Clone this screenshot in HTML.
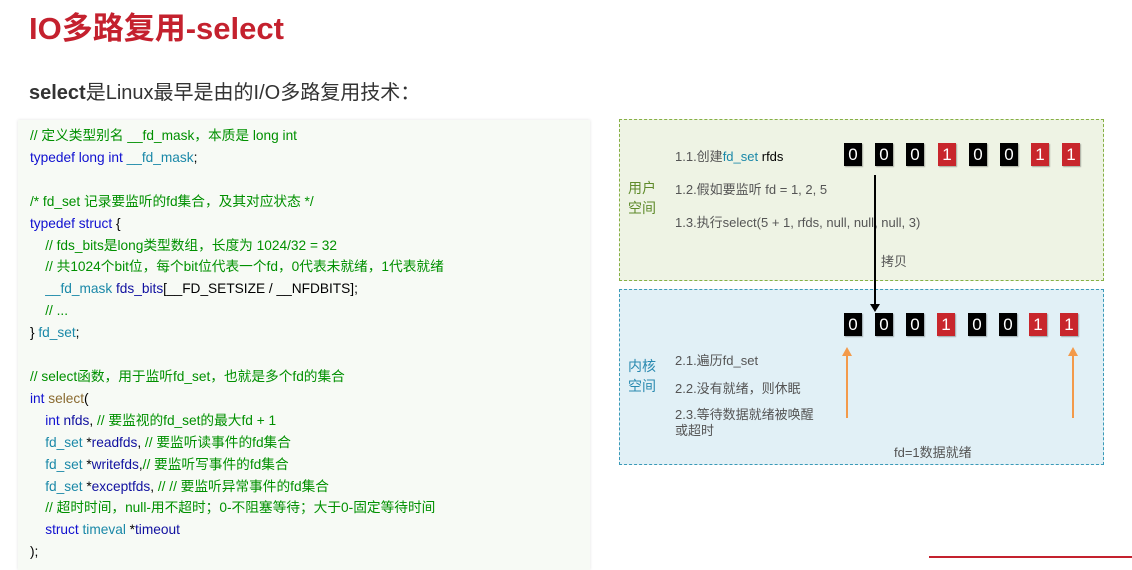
<!DOCTYPE html>
<html><head><meta charset="utf-8"><style>
body{margin:0;width:1132px;height:558px;background:#fff;overflow:hidden;position:relative;font-family:"Liberation Sans","Noto Sans CJK SC",sans-serif}
.a{position:absolute;white-space:nowrap}
h1{position:absolute;left:29px;top:3px;margin:0;font-size:31px;color:#c4212e;font-weight:bold;letter-spacing:0}
.p{left:29px;top:76px;font-size:20px;color:#333}
.code{position:absolute;left:18px;top:120px;width:572px;height:450px;background:#f7faf5;box-shadow:0 0 3px rgba(0,0,0,.12)}
.code pre{margin:0;position:absolute;left:12px;top:5px;font-family:"Liberation Sans","Noto Sans CJK SC",sans-serif;font-size:13.7px;line-height:21.9px;color:#000}
.c{color:#009000}.k{color:#1010d0}.t{color:#1a88a8}.f{color:#8a6a30}.v{color:#1010a0}
.box{position:absolute;left:619px;width:485px;box-sizing:border-box}
.d{font-size:13px;color:#555}
.cell{position:absolute;width:18px;height:23px;background:#000;color:#fff;font-size:17px;text-align:center;line-height:23px;box-shadow:1px 1px 1px rgba(0,0,0,.3)}
.r{background:#c8262c}
</style></head><body>
<h1>IO多路复用-select</h1>
<div class="a p"><b>select</b>是Linux最早是由的I/O多路复用技术：</div>
<div class="code"><pre><span class="c">// 定义类型别名 __fd_mask，本质是 long int</span>
<span class="k">typedef long int</span> <span class="t">__fd_mask</span>;

<span class="c">/* fd_set 记录要监听的fd集合，及其对应状态 */</span>
<span class="k">typedef struct</span> {
    <span class="c">// fds_bits是long类型数组，长度为 1024/32 = 32</span>
    <span class="c">// 共1024个bit位，每个bit位代表一个fd，0代表未就绪，1代表就绪</span>
    <span class="t">__fd_mask</span> <span class="v">fds_bits</span>[__FD_SETSIZE / __NFDBITS];
    <span class="c">// ...</span>
} <span class="t">fd_set</span>;

<span class="c">// select函数，用于监听fd_set，也就是多个fd的集合</span>
<span class="k">int</span> <span class="f">select</span>(
    <span class="k">int</span> <span class="v">nfds</span>, <span class="c">// 要监视的fd_set的最大fd + 1</span>
    <span class="t">fd_set</span> *<span class="v">readfds</span>, <span class="c">// 要监听读事件的fd集合</span>
    <span class="t">fd_set</span> *<span class="v">writefds</span>,<span class="c">// 要监听写事件的fd集合</span>
    <span class="t">fd_set</span> *<span class="v">exceptfds</span>, <span class="c">// // 要监听异常事件的fd集合</span>
    <span class="c">// 超时时间，null-用不超时；0-不阻塞等待；大于0-固定等待时间</span>
    <span class="k">struct</span> <span class="t">timeval</span> *<span class="v">timeout</span>
);</pre></div>

<div class="box" style="top:119px;height:162px;background:#eef3e4;border:1px dashed #86b044"></div>
<div class="box" style="top:289px;height:176px;background:#e1f0f6;border:1px dashed #3a9ab8"></div>

<div class="a" style="left:628px;top:178px;font-size:14px;line-height:20px;color:#5e8a2a">用户<br>空间</div>
<div class="a" style="left:628px;top:356px;font-size:14px;line-height:20px;color:#2a8ab0">内核<br>空间</div>

<div class="a d" style="left:675px;top:146px">1.1.创建<span style="color:#1a88a8">fd_set</span> <span style="color:#000">rfds</span></div>
<div class="a d" style="left:675px;top:179px">1.2.假如要监听 fd = 1, 2, 5</div>
<div class="a d" style="left:675px;top:212px">1.3.执行select(5 + 1, rfds, null, null, null, 3)</div>
<div class="a d" style="left:881px;top:251px">拷贝</div>
<div class="a d" style="left:675px;top:350px">2.1.遍历fd_set</div>
<div class="a d" style="left:675px;top:378px">2.2.没有就绪，则休眠</div>
<div class="a d" style="left:675px;top:407px;line-height:16px">2.3.等待数据就绪被唤醒<br>或超时</div>
<div class="a d" style="left:894px;top:442px">fd=1数据就绪</div>

<div class="cell" style="left:844px;top:143px">0</div><div class="cell" style="left:875px;top:143px">0</div><div class="cell" style="left:906px;top:143px">0</div><div class="cell r" style="left:938px;top:143px">1</div><div class="cell" style="left:969px;top:143px">0</div><div class="cell" style="left:1000px;top:143px">0</div><div class="cell r" style="left:1031px;top:143px">1</div><div class="cell r" style="left:1062px;top:143px">1</div>
<div class="cell" style="left:844px;top:313px">0</div><div class="cell" style="left:875px;top:313px">0</div><div class="cell" style="left:906px;top:313px">0</div><div class="cell r" style="left:937px;top:313px">1</div><div class="cell" style="left:968px;top:313px">0</div><div class="cell" style="left:999px;top:313px">0</div><div class="cell r" style="left:1029px;top:313px">1</div><div class="cell r" style="left:1060px;top:313px">1</div>

<svg class="a" style="left:0;top:0" width="1132" height="558">
<line x1="875" y1="175" x2="875" y2="305" stroke="#000" stroke-width="2"/>
<polygon points="870,304 880,304 875,312" fill="#000"/>
<line x1="847" y1="355" x2="847" y2="418" stroke="#f39a4a" stroke-width="2"/>
<polygon points="842,356 852,356 847,347" fill="#f39a4a"/>
<line x1="1073" y1="355" x2="1073" y2="418" stroke="#f39a4a" stroke-width="2"/>
<polygon points="1068,356 1078,356 1073,347" fill="#f39a4a"/>
<line x1="929" y1="557" x2="1132" y2="557" stroke="#c4212e" stroke-width="2"/>
</svg>
</body></html>
